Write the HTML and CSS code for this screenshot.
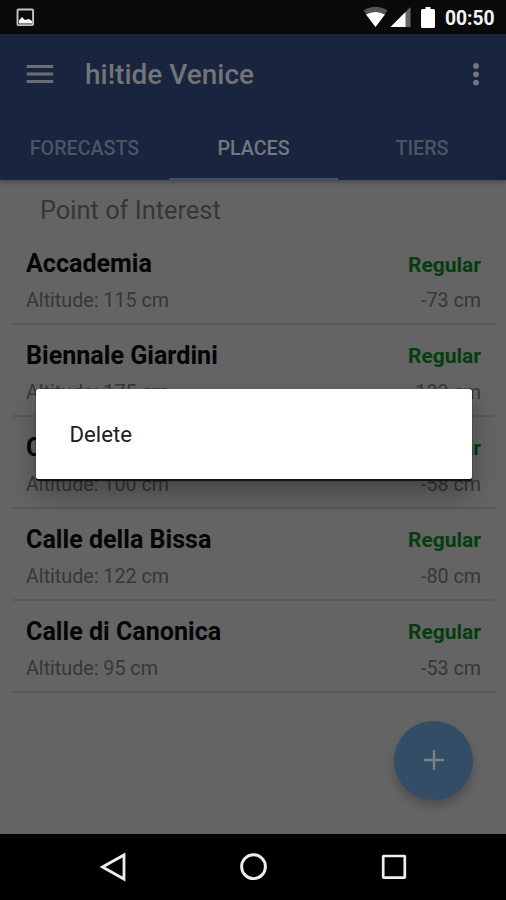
FILE: index.html
```html
<!DOCTYPE html>
<html lang="en">
<head>
<meta charset="utf-8">
<title>hi!tide Venice</title>
<link rel="stylesheet" href="styles.css">
</head>
<body>
<div class="screen">
  <div class="status">
    <svg class="shot" width="20" height="20" viewBox="0 0 20 20"><rect x="1.500" y="1.500" width="15.600" height="15.600" rx="1" fill="none" stroke="#c4c4c4" stroke-width="1.900"/><path d="M3 15.500V12.500L6 9l3 3 4-1 3 2v2.500z" fill="#fff"/></svg>
    <svg class="signals" width="78" height="24" viewBox="0 0 78 24"><path d="M1.500 5.500Q13.500-2 25.500 5.500L13.500 22z" fill="#555"/><path d="M4 9.500Q13.500 4.500 23 9.500L13.500 22z" fill="#fff"/><path d="M28.500 22L48.500 2v20z" fill="#666"/><path d="M28.500 22L43.500 7v15z" fill="#fff"/><path d="M60.500 4h3V2h5v2h3q1.500 0 1.500 1.500v16q0 1.500-1.500 1.500h-11q-1.500 0-1.500-1.500v-16Q59 4 60.500 4z" fill="#fff"/></svg>
    <span class="clock">00:50</span>
  </div>
  <header class="header">
    <div class="bar">
      <svg class="burger" width="28" height="20" viewBox="0 0 28 20"><path d="M.7 2.500h26.500M.7 10h26.500M.7 17.500h26.500" stroke="#6b6d70" stroke-width="2.800"/></svg>
      <h1 class="title">hi!tide Venice</h1>
      <svg class="more" width="8" height="24" viewBox="0 0 8 24"><g fill="#75777b"><circle cx="4" cy="4" r="2.900"/><circle cx="4" cy="12.300" r="2.900"/><circle cx="4" cy="20.600" r="2.900"/></g></svg>
    </div>
    <nav class="tabs">
      <span class="tab">FORECASTS</span>
      <span class="tab active">PLACES</span>
      <span class="tab">TIERS</span>
    </nav>
  </header>
  <main class="content">
    <h2 class="section">Point of Interest</h2>
    <ul class="list">
      <li class="row"><b class="name">Accademia</b><b class="state">Regular</b><span class="alt">Altitude: 115 cm</span><span class="level">-73 cm</span></li>
      <li class="row"><b class="name">Biennale Giardini</b><b class="state">Regular</b><span class="alt">Altitude: 175 cm</span><span class="level">-133 cm</span></li>
      <li class="row"><b class="name">C</b><b class="state">Regular</b><span class="alt">Altitude: 100 cm</span><span class="level">-58 cm</span></li>
      <li class="row"><b class="name">Calle della Bissa</b><b class="state">Regular</b><span class="alt">Altitude: 122 cm</span><span class="level">-80 cm</span></li>
      <li class="row"><b class="name">Calle di Canonica</b><b class="state">Regular</b><span class="alt">Altitude: 95 cm</span><span class="level">-53 cm</span></li>
    </ul>
    <div class="fab"><svg width="20" height="20" viewBox="0 0 20 20"><path d="M10 0v20M0 10h20" stroke="#7b8187" stroke-width="2.400"/></svg></div>
  </main>
  <footer class="navbar">
    <svg width="26" height="30" viewBox="0 0 26 30"><path d="M2.500 15L24 3v24z" fill="none" stroke="#eee" stroke-width="2.800"/></svg>
    <svg width="30" height="30" viewBox="0 0 30 30"><circle cx="14.500" cy="14.700" r="11.900" fill="none" stroke="#eee" stroke-width="2.900"/></svg>
    <svg width="26" height="30" viewBox="0 0 26 30"><rect x="2.200" y="4" width="21.600" height="21.600" rx=".5" fill="none" stroke="#eee" stroke-width="2.700"/></svg>
  </footer>
  <div class="dialog">Delete</div>
</div>
</body>
</html>
```
FILE: styles.css
```css
* { box-sizing: border-box; }
body { margin: 0; font-family: Roboto, "Liberation Sans", sans-serif; }
svg { display: block; flex: none; }
.screen { position: relative; width: 506px; height: 900px; display: flex; flex-direction: column; overflow: hidden; background: #646464; }
.status { height: 34px; flex: none; display: flex; align-items: center; padding: 0 11px 0 16px; background: #0a0a0a; color: #f4f4f4; }
.signals { margin: 0 5px 0 auto; }
.shot { margin-top: 1px; }
.clock { font-size: 19.300px; font-weight: 700; width: 50px; line-height: 24px; margin-top: 3px; }
.header { position: relative; height: 146px; flex: none; background: #19243f; box-shadow: 0 2px 4px rgba(0, 0, 0, .3); }
.bar { height: 80px; display: flex; align-items: center; padding: 0 26px; }
.burger { margin-top: -1px; }
.more { margin-top: -1px; }
.title { margin: 0 auto 0 31px; font-size: 28px; font-weight: 500; color: #727478; white-space: nowrap; }
.tabs { height: 66px; display: grid; grid-template-columns: 169px 169px 168px; text-align: center; }
.tab { height: 66px; font-size: 19.700px; font-weight: 500; line-height: 69px; color: #4c5462; border-bottom: 2.500px solid transparent; }
.tab.active { color: #75787d; border-color: #38546f; }
.content { position: relative; flex: 1; }
.section { margin: 0; padding: 15px 40px 0; height: 53.500px; font-size: 25.400px; line-height: 30px; font-weight: 400; color: #363636; }
.list { list-style: none; margin: 0; padding: 0 11px 0 12px; }
.row { height: 91.900px; padding: 12.500px 14px 0; display: grid; grid-template-columns: 1fr auto; grid-template-rows: 36px 32px; align-items: center; border-bottom: 2px solid #5a5a5a; white-space: nowrap; }
.name { font-size: 25.100px; font-weight: 700; color: #050505; padding-bottom: 1px; }
.state { font-size: 21px; font-weight: 700; color: #063d10; text-align: right; padding-top: 1px; }
.alt, .level { font-size: 19.700px; color: #373737; padding-top: 5px; }
.level { text-align: right; }
.fab { position: absolute; left: 394px; top: 540.500px; width: 79px; height: 79px; border-radius: 50%; background: #334d66; display: flex; align-items: center; justify-content: center; box-shadow: 0 6px 10px rgba(0, 0, 0, .22); }
.navbar { height: 66.500px; flex: none; background: #000; display: flex; align-items: center; justify-content: space-between; padding: 0 99px 0 100px; }
.dialog { position: absolute; left: 36px; top: 388.500px; width: 436px; height: 90px; padding-left: 33.500px; line-height: 91px; font-size: 22.200px; color: #202020; background: #fff; border-radius: 2.500px; box-shadow: 0 1.500px 1px #111, 0 0 1px #333, 0 14px 26px rgba(0, 0, 0, .3); }
```
